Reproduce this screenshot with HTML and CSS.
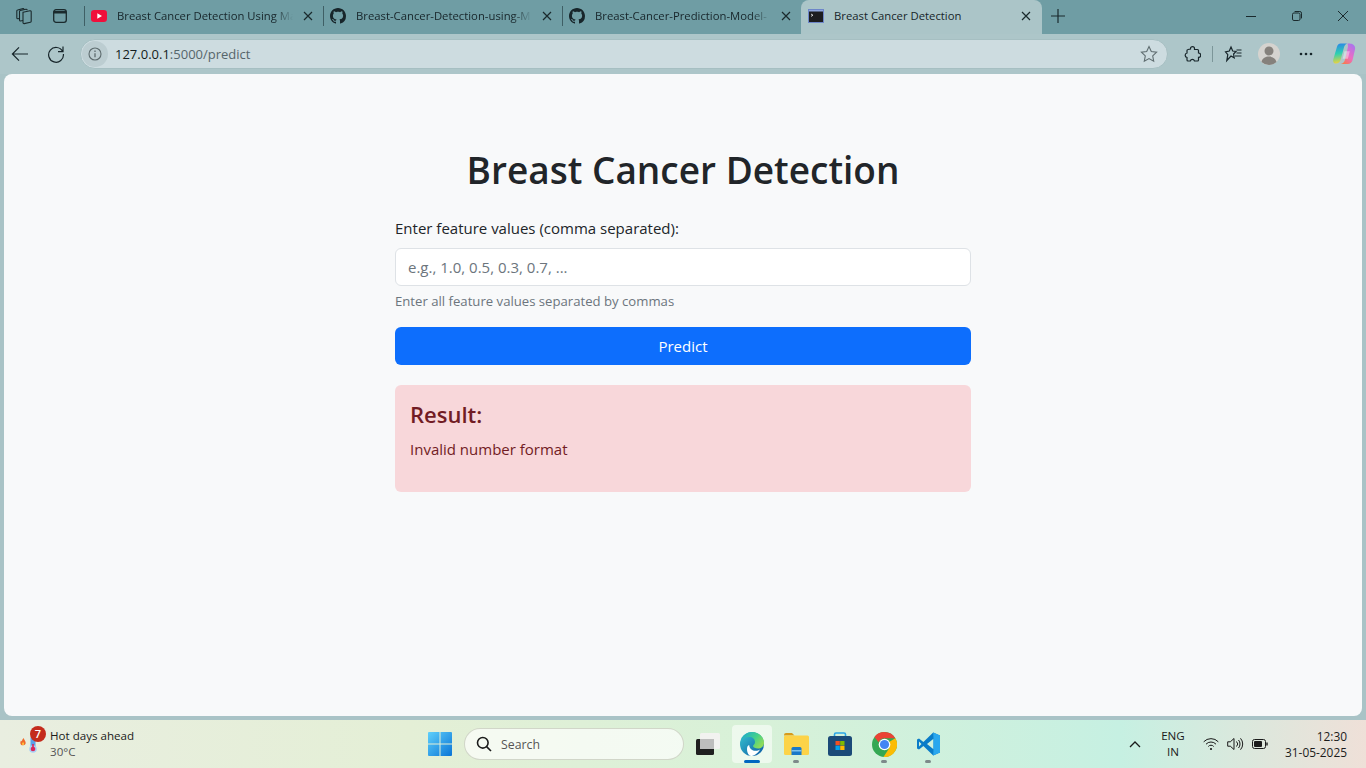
FILE: index.html

```html
<!DOCTYPE html>
<html lang="en">
<head>
    <meta charset="UTF-8">
    <title>Breast Cancer Detection</title>
    <link rel="stylesheet" href="styles.css">
</head>
<body>

<div class="tabstrip">
    <div class="strip-btn">
        <svg width="18" height="18" viewBox="0 0 18 18" fill="none" stroke="#1a2a2d" stroke-width="1.1"><path d="M8 5.200 15 3.800a1 1 0 0 1 1.200 1v9.400a1 1 0 0 1-.8 1l-6.200 1.400a1 1 0 0 1-1.200-1z"/><path d="M8 13.500 5.500 14a1 1 0 0 1-1-1V4.500a1 1 0 0 1 .8-1L11 2.300a1 1 0 0 1 1.200.9"/><path d="M4.500 11.500 2.800 11.800a1 1 0 0 1-1-1V4a1 1 0 0 1 .8-1L8 1.600a1 1 0 0 1 1 .9"/></svg>
    </div>
    <div class="strip-btn">
        <svg width="16" height="16" viewBox="0 0 16 16" fill="none" stroke="#1a2a2d" stroke-width="1.3"><rect x="1.700" y="1.700" width="12.600" height="12.600" rx="2.400"/><path d="M1.700 4.200h12.600" stroke-width="2.600"/></svg>
    </div>
    <div class="tab tab-first">
        <svg class="favicon" width="16" height="16" viewBox="0 0 16 16"><rect y="2" width="16" height="12" rx="3.200" fill="#f00f3c"/><path d="M6.300 5.200 11 8l-4.700 2.800z" fill="#fff"/></svg>
        <span class="tab-title">Breast Cancer Detection Using Ma</span>
        <svg class="tab-close" width="10" height="10" viewBox="0 0 10 10" stroke="#1a2a2d" stroke-width="1.200"><path d="M1 1l8 8M9 1 1 9"/></svg>
    </div>
    <div class="tab">
        <svg class="favicon" width="16" height="16" viewBox="0 0 16 16" fill="#17252a"><path d="M8 0C3.580 0 0 3.580 0 8c0 3.540 2.290 6.530 5.470 7.590.4.070.55-.17.55-.38 0-.19-.01-.82-.01-1.490-2.010.37-2.530-.49-2.690-.94-.09-.23-.48-.94-.82-1.130-.28-.15-.68-.52-.01-.53.63-.01 1.080.58 1.230.82.72 1.210 1.870.87 2.330.66.07-.52.28-.87.51-1.070-1.780-.2-3.640-.89-3.640-3.950 0-.87.31-1.590.82-2.150-.08-.2-.36-1.020.08-2.120 0 0 .67-.21 2.200.82.64-.18 1.320-.27 2-.27s1.360.09 2 .27c1.530-1.040 2.200-.82 2.200-.82.44 1.100.16 1.920.08 2.120.51.56.82 1.270.82 2.150 0 3.070-1.870 3.750-3.650 3.950.29.25.54.73.54 1.480 0 1.070-.01 1.930-.01 2.200 0 .21.15.46.55.38A8.010 8.010 0 0 0 16 8c0-4.420-3.580-8-8-8z"/></svg>
        <span class="tab-title">Breast-Cancer-Detection-using-M</span>
        <svg class="tab-close" width="10" height="10" viewBox="0 0 10 10" stroke="#1a2a2d" stroke-width="1.200"><path d="M1 1l8 8M9 1 1 9"/></svg>
    </div>
    <div class="tab">
        <svg class="favicon" width="16" height="16" viewBox="0 0 16 16" fill="#17252a"><path d="M8 0C3.580 0 0 3.580 0 8c0 3.540 2.290 6.530 5.470 7.590.4.070.55-.17.55-.38 0-.19-.01-.82-.01-1.490-2.010.37-2.530-.49-2.690-.94-.09-.23-.48-.94-.82-1.130-.28-.15-.68-.52-.01-.53.63-.01 1.080.58 1.230.82.72 1.210 1.870.87 2.330.66.07-.52.28-.87.51-1.070-1.780-.2-3.640-.89-3.640-3.950 0-.87.31-1.590.82-2.150-.08-.2-.36-1.020.08-2.120 0 0 .67-.21 2.200.82.64-.18 1.320-.27 2-.27s1.360.09 2 .27c1.530-1.040 2.200-.82 2.200-.82.44 1.100.16 1.920.08 2.120.51.56.82 1.270.82 2.150 0 3.070-1.870 3.750-3.650 3.950.29.25.54.73.54 1.480 0 1.070-.01 1.930-.01 2.200 0 .21.15.46.55.38A8.010 8.010 0 0 0 16 8c0-4.420-3.580-8-8-8z"/></svg>
        <span class="tab-title">Breast-Cancer-Prediction-Model-</span>
        <svg class="tab-close" width="10" height="10" viewBox="0 0 10 10" stroke="#1a2a2d" stroke-width="1.200"><path d="M1 1l8 8M9 1 1 9"/></svg>
    </div>
    <div class="tab tab-active">
        <svg class="favicon" width="16" height="16" viewBox="0 0 16 16"><rect x=".5" y="1.500" width="15" height="13" fill="#1d1d1f" stroke="#6d86c9"/><path d="M1 2h14v1.500H1z" fill="#8fa6dc"/><path d="M3 6l2 1.200L3 8.400" fill="none" stroke="#ddd" stroke-width=".9"/></svg>
        <span class="tab-title">Breast Cancer Detection</span>
        <svg class="tab-close" width="10" height="10" viewBox="0 0 10 10" stroke="#1a2a2d" stroke-width="1.200"><path d="M1 1l8 8M9 1 1 9"/></svg>
    </div>
    <svg class="new-tab" width="14" height="14" viewBox="0 0 14 14" stroke="#1a2a2d" stroke-width="1.200"><path d="M7 0v14M0 7h14"/></svg>
    <div class="win-controls">
        <svg width="10" height="10" viewBox="0 0 10 10" stroke="#1a2a2d"><path d="M0 5.500h10"/></svg>
        <svg width="10" height="10" viewBox="0 0 10 10" fill="none" stroke="#1a2a2d"><rect x=".5" y="2" width="7.500" height="7.500" rx="1.400"/><path d="M2.600 .5h5.200A1.700 1.700 0 0 1 9.500 2.200v5.200"/></svg>
        <svg width="10" height="10" viewBox="0 0 10 10" stroke="#1a2a2d"><path d="M0 0l10 10M10 0 0 10"/></svg>
    </div>
</div>

<div class="toolbar">
    <svg class="nav-btn" width="18" height="16" viewBox="0 0 18 16" fill="none" stroke="#17252a" stroke-width="1.200"><path d="M17 8H1.500M8 1.400 1.400 8 8 14.600"/></svg>
    <svg class="nav-btn" width="18" height="18" viewBox="0 0 18 18" fill="none" stroke="#17252a" stroke-width="1.200"><path d="M15.600 6.400A7.400 7.400 0 1 0 16.400 9M16 1.600v5h-5"/></svg>
    <div class="address-bar">
        <div class="site-info">
            <svg width="14" height="14" viewBox="0 0 14 14" fill="none" stroke="#5d6b6e" stroke-width="1.100"><circle cx="7" cy="7" r="6"/><path d="M7 6.200v4" stroke-width="1.300"/><path d="M7 3.600v1.300" stroke-width="1.300"/></svg>
        </div>
        <span class="url"><span class="url-host">127.0.0.1</span>:5000/predict</span>
        <svg class="fav-star" width="18" height="18" viewBox="0 0 18 18" fill="none" stroke="#5f6d70" stroke-width="1.100"><path d="M9 1.600l2.300 4.900 5.300.7-3.900 3.700 1 5.300L9 13.600l-4.700 2.600 1-5.300L1.400 7.200l5.300-.7z"/></svg>
    </div>
    <div class="toolbar-icons">
        <svg width="17" height="17" viewBox="0 0 17 17" fill="none" stroke="#17252a" stroke-width="1.200"><path d="M6.500 3V2.600a2 2 0 0 1 4 0V3.500h3a1 1 0 0 1 1 1V7a2.200 2.200 0 0 1 0 4.400V14a1 1 0 0 1-1 1H10.500a2.200 2.200 0 0 0-4.200 0H4a1 1 0 0 1-1-1v-2.500a2.300 2.300 0 0 1 0-4.500V4.500a1 1 0 0 1 1-1z"/></svg>
        <span class="toolbar-sep"></span>
        <svg class="favs-icon" width="18" height="18" viewBox="0 0 18 18" fill="none" stroke="#17252a" stroke-width="1.200"><path d="M7 2 8.700 6 12 6.500 9.600 9l.6 3.800L7 11 2.800 15.500l1-5.800L1.500 6.800l3.800-.8zM12.500 5h5M12.500 8h5M11 11h6.500"/></svg>
        <div class="avatar">
            <svg width="24" height="24" viewBox="0 0 24 24"><circle cx="12" cy="12" r="11" fill="#d5d3cf"/><circle cx="12" cy="9" r="4.500" fill="#85817c"/><path d="M4.500 20c1-4 4-5.400 7.500-5.400s6.500 1.400 7.500 5.400a11 11 0 0 1-15 0z" fill="#85817c"/></svg>
        </div>
        <svg class="more-icon" width="14" height="4" viewBox="0 0 14 4" fill="#17252a"><circle cx="2" cy="2" r="1.300"/><circle cx="7" cy="2" r="1.300"/><circle cx="12" cy="2" r="1.300"/></svg>
        <svg class="copilot" width="23" height="22" viewBox="0 0 24 22">
            <defs>
                <linearGradient id="copA" x1=".3" y1="0" x2=".4" y2="1"><stop offset="0" stop-color="#2a86e8"/><stop offset=".5" stop-color="#2fd0b0"/><stop offset="1" stop-color="#f2d33c"/></linearGradient>
                <linearGradient id="copB" x1=".8" y1="0" x2=".2" y2="1"><stop offset="0" stop-color="#a874ee"/><stop offset=".55" stop-color="#ec6cc4"/><stop offset="1" stop-color="#fa7a48"/></linearGradient>
            </defs>
            <path d="M8 0h7c-2 .5-3 2-3.500 4L8 17c-.6 2.500-2.500 4-5 4-2 0-3.300-1.700-2.800-4L4 4c.5-2.500 2-4 4-4z" fill="url(#copA)"/>
            <path d="M15 0c2-.2 4 0 5 .5C22.500 1.500 23.500 4 23 6l-2.500 11c-.5 2.500-2.500 4.500-5 4.500H8c2.500-.5 4-2.500 4.500-4.500L15.500 4c.3-1.500 0-3-.5-4z" fill="url(#copB)"/>
            <path d="M12 8h5.500l-2 8H10z" fill="#fff" fill-opacity=".4"/>
        </svg>
    </div>
</div>

<div class="window-body">
    <main class="page">
        <div class="form-wrap">
            <h1>Breast Cancer Detection</h1>
            <form>
                <label class="form-label" for="features">Enter feature values (comma separated):</label>
                <input class="form-control" type="text" id="features" placeholder="e.g., 1.0, 0.5, 0.3, 0.7, ...">
                <div class="form-text">Enter all feature values separated by commas</div>
                <button class="btn-predict" type="button">Predict</button>
            </form>
            <div class="result">
                <h4>Result:</h4>
                <p>Invalid number format</p>
            </div>
        </div>
    </main>
</div>

<footer class="taskbar">
    <div class="weather">
        <div class="weather-icon">
            <svg width="24" height="26" viewBox="0 0 24 26">
                <path d="M3.300 11c-1.300-.8-1.200-3-.3-4.400.3.500.7.800 1 .6 0-1.200.7-2.500 1.700-3.200 0 1.500 2 2.700 2 5 0 1-1 2.200-2.200 2.200H4.800c-.6 0-1-.1-1.500-.2z" fill="#ef6a2c"/>
                <path d="M4.500 11c-.8-.8-.4-2 .6-3 .8 1 1.300 2 .6 3z" fill="#ffc83d"/>
                <rect x="12.500" y="2" width="5" height="13" rx="2" fill="#5aa0ea"/>
                <circle cx="15" cy="15" r="3.800" fill="#a9d0f5"/>
                <rect x="14.200" y="10" width="1.600" height="5" fill="#d8265a"/>
                <circle cx="15" cy="15" r="2.300" fill="#d8265a"/>
            </svg>
            <span class="badge">7</span>
        </div>
        <div class="weather-text">
            <div class="weather-title">Hot days ahead</div>
            <div class="weather-temp">30°C</div>
        </div>
    </div>

    <div class="task-icons">
        <div class="task-slot">
            <svg width="24" height="24" viewBox="0 0 24 24">
                <defs><linearGradient id="winG" x1="0" y1="0" x2="1" y2="1"><stop offset="0" stop-color="#5fd0fb"/><stop offset="1" stop-color="#0a74d6"/></linearGradient></defs>
                <path d="M0 1a1 1 0 0 1 1-1h10.500v11.500H0zM12.500 0H23a1 1 0 0 1 1 1v10.500H12.500zM0 12.500h11.500V24H1a1 1 0 0 1-1-1zM12.500 12.500H24V23a1 1 0 0 1-1 1H12.500z" fill="url(#winG)"/>
            </svg>
        </div>
        <div class="search">
            <svg width="16" height="16" viewBox="0 0 16 16" fill="none" stroke="#1b1b1b" stroke-width="1.600"><circle cx="6.800" cy="6.800" r="5.300"/><path d="M10.600 10.600 15 15"/></svg>
            <span>Search</span>
        </div>
        <div class="task-slot">
            <svg width="24" height="22" viewBox="0 0 24 22">
                <rect x="4" y="0" width="20" height="16" rx="1.500" fill="#f2f2f0"/>
                <rect x="0" y="6" width="18" height="16" rx="1.500" fill="#1f1f1f"/>
                <rect x="4" y="6" width="14" height="10" fill="#bdbdbd"/>
            </svg>
        </div>
        <div class="task-slot task-active">
            <svg width="24" height="24" viewBox="0 0 24 24">
                <defs>
                    <linearGradient id="edgeA" x1="0" y1="0" x2="1" y2="1"><stop offset="0" stop-color="#37c6d0"/><stop offset="1" stop-color="#0c59a4"/></linearGradient>
                    <linearGradient id="edgeB" x1="0" y1="0" x2="1" y2=".6"><stop offset="0" stop-color="#1aa5d8"/><stop offset=".6" stop-color="#41d18b"/><stop offset="1" stop-color="#8edb5a"/></linearGradient>
                </defs>
                <circle cx="12" cy="12" r="12" fill="url(#edgeA)"/>
                <path d="M1 8C3 3 7 0 12 0c7 0 12 5 12 11 0 3.500-3 5.500-6 5.500-2.500 0-5-1-5-2.500 0-1 2-1.400 2-4C15 7 12.500 5 9.500 5 6 5 3 6 1 8z" fill="url(#edgeB)"/>
                <path d="M9.200 13c0 3.800 3.700 6.500 7.800 5.700 1.200-.2 2.200-.7 3-1.200-2.200 4-6 6.500-9 6.500C9 24 7 21 7 17c0-2 .9-3.800 2.200-4z" fill="#fff"/>
            </svg>
            <span class="active-bar"></span>
        </div>
        <div class="task-slot">
            <svg width="25" height="22" viewBox="0 0 25 22">
                <path d="M0 2a2 2 0 0 1 2-2h6l2.500 2.500H0z" fill="#d79b1c"/>
                <rect y="2.500" width="25" height="19.500" rx="1.500" fill="#fcd348"/>
                <path d="M7.500 15.500a1.500 1.500 0 0 1 1.500-1.500h7a1.500 1.500 0 0 1 1.500 1.500V22h-10z" fill="#1a78c8"/>
                <rect x="7.500" y="17" width="10" height="1.500" fill="#7cc0ee"/>
            </svg>
            <span class="run-dot"></span>
        </div>
        <div class="task-slot">
            <svg width="24" height="24" viewBox="0 0 24 24" fill="none">
                <path d="M6.500 5V2.500a1.500 1.500 0 0 1 1.500-1.500h8a1.500 1.500 0 0 1 1.500 1.500V5" stroke="#2aa5e6" stroke-width="1.600"/>
                <rect y="4" width="24" height="20" rx="2.500" fill="#1b4a78"/>
                <rect x="7.500" y="9" width="4.300" height="4.300" fill="#f25022"/>
                <rect x="12.200" y="9" width="4.300" height="4.300" fill="#7fba00"/>
                <rect x="7.500" y="13.700" width="4.300" height="4.300" fill="#00a4ef"/>
                <rect x="12.200" y="13.700" width="4.300" height="4.300" fill="#ffb900"/>
            </svg>
        </div>
        <div class="task-slot">
            <svg width="25" height="25" viewBox="0 0 24 24">
                <circle cx="12" cy="12" r="12" fill="#34a853"/>
                <path d="M12 0a12 12 0 0 1 10.400 6H12a6 6 0 0 0-5.600 3.800L2.300 4.700A12 12 0 0 1 12 0z" fill="#ea4335"/>
                <path d="M22.400 6A12 12 0 0 1 11 24l5.200-8a6 6 0 0 0 .2-6.500z" fill="#fbbc05"/>
                <circle cx="12" cy="12" r="5.600" fill="#fff"/>
                <circle cx="12" cy="12" r="4.400" fill="#4285f4"/>
            </svg>
            <span class="run-dot"></span>
        </div>
        <div class="task-slot">
            <svg width="24" height="24" viewBox="0 0 24 24">
                <path fill-rule="evenodd" d="M17.200.4 24 3.600v16.800l-6.800 3.200L7.400 14.100 3 17.500l-2-1v-9l2-1 4.400 3.400zM17.500 6.800 11 12l6.500 5.200zM3 9.500v5L5.500 12z" fill="#0a7cc8"/>
                <path d="M17.200.4 24 3.600v16.800l-6.800 3.200.3-6.400V6.800z" fill="#2aa7ee"/>
            </svg>
            <span class="run-dot"></span>
        </div>
    </div>

    <div class="tray">
        <svg width="12" height="7" viewBox="0 0 12 7" fill="none" stroke="#1b1b1b" stroke-width="1.300"><path d="M1 6l5-5 5 5"/></svg>
        <div class="lang">ENG<br>IN</div>
        <div class="tray-icons">
            <svg width="16" height="14" viewBox="0 0 16 14" fill="none" stroke="#1b1b1b" stroke-width="1"><path d="M.7 4.800a10 10 0 0 1 14.600 0M3 7.200a6.800 6.800 0 0 1 10 0M5.300 9.500a3.500 3.500 0 0 1 5.400 0"/><circle cx="8" cy="12" r="1.100" fill="#1b1b1b" stroke="none"/></svg>
            <svg width="17" height="14" viewBox="0 0 17 14" fill="none" stroke="#1b1b1b" stroke-width="1"><path d="M.7 4.800h2.600L7 1.500v11L3.300 9.200H.7zM9.500 4.500a3.500 3.500 0 0 1 0 5M11.500 3a6 6 0 0 1 0 8M13.500 1.300a8.500 8.500 0 0 1 0 11.400"/></svg>
            <svg width="16" height="10" viewBox="0 0 16 10" fill="none" stroke="#1b1b1b"><rect x=".5" y=".5" width="13" height="9" rx="2"/><rect x="2" y="2" width="8" height="6" rx="1" fill="#1b1b1b" stroke="none"/><path d="M15 3.500v3" stroke-width="1.400"/></svg>
        </div>
        <div class="clock">12:30<br>31-05-2025</div>
    </div>
</footer>

</body>
</html>
```

FILE: styles.css

```css
* { box-sizing: border-box; }
html, body { height: 100%; }
body {
    margin: 0;
    height: 768px;
    overflow: hidden;
    display: flex;
    flex-direction: column;
    background: #a9c3c6;
    font-family: "Open Sans", "Noto Sans", sans-serif;
    color: #212529;
}

/* tab strip */
.tabstrip { height: 34px; flex: none; background: #6f9da4; display: flex; align-items: center; color: #17252a; font-size: 11.3px; }
.strip-btn { width: 36px; display: flex; justify-content: center; flex: none; padding-bottom: 3px; }
.strip-btn:first-child { margin-left: 6px; }
.tab { width: 239px; height: 34px; flex: none; display: flex; align-items: center; padding: 0 10px 3px 7px; position: relative; }
.tab::before { content: ""; position: absolute; left: 0; top: 6px; height: 20px; width: 1px; background: #3f5f65; }
.tab-first { margin-left: 6px; }
.favicon { flex: none; margin-right: 10px; }
.tab-title { flex: 1; min-width: 0; white-space: nowrap; overflow: hidden; -webkit-mask-image: linear-gradient(to right, #000 88%, transparent 99%); mask-image: linear-gradient(to right, #000 88%, transparent 99%); }
.tab-close { flex: none; margin-left: 8px; }
.tab-active { width: 241px; background: #abc5c8; border-radius: 8px 8px 0 0; padding-right: 11px; }
.tab-active::before { display: none; }
.tab-active .tab-title { -webkit-mask-image: none; mask-image: none; }
.new-tab { margin-left: 9px; flex: none; margin-bottom: 3px; }
.win-controls { margin-left: auto; display: flex; gap: 36px; padding: 0 18px 3px 0; align-items: center; }
.win-controls svg { display: block; }

/* toolbar */
.toolbar { height: 40px; flex: none; background: #adc6c9; display: flex; align-items: center; padding: 0 0 0 11px; }
.nav-btn { flex: none; margin-right: 19px; }
.nav-btn + .nav-btn { margin-left: -1px; margin-right: 16px; }
.address-bar { width: 1088px; height: 30px; flex: none; margin-left: -1px; background: #cddce0; border: 1px solid #a6bfc2; border-radius: 15px; display: flex; align-items: center; font-size: 13px; color: #56666b; }
.site-info { width: 26px; height: 26px; border-radius: 13px; flex: none; display: flex; align-items: center; justify-content: center; background: #bccdd1; margin: 0 7px 0 1px; }
.url-host { color: #131d20; }
.fav-star { margin-left: auto; margin-right: 9px; }
.toolbar-icons { display: flex; align-items: center; margin-left: 16px; }
.toolbar-icons svg { display: block; }
.toolbar-sep { width: 1px; height: 16px; background: #7c9699; margin: 0 10px 0 11px; }
.favs-icon { margin-left: 1px; }
.avatar { margin-left: 15px; display: flex; }
.more-icon { margin-left: 18px; }
.copilot { margin-left: 20px; }

/* page card */
.window-body { flex: 1; padding: 0 4px 4px; min-height: 0; display: flex; }
.page { flex: 1; background: #f8f9fa; border-radius: 8px; padding-top: 72px; }
.form-wrap { width: 576px; margin: 0 auto; }
h1 { font-size: 37px; font-weight: 600; line-height: 48px; margin: 0 0 22px; text-align: center; color: #212529; }
.form-label { display: block; font-size: 15px; line-height: 24px; margin-bottom: 8px; }
.form-control { display: block; width: 100%; height: 38px; padding: 6px 12px; background: #fff; border: 1px solid #dee2e6; border-radius: 6px; font-family: inherit; font-size: 15px; }
.form-control::placeholder { color: #6c757d; opacity: 1; }
.form-text { font-size: 13.15px; line-height: 21px; margin-top: 5px; margin-bottom: 15px; color: #6c757d; }
.btn-predict { display: block; width: 100%; height: 38px; background: #0d6efd; color: #fff; border: none; border-radius: 6px; font-family: inherit; font-size: 15px; }
.result { margin-top: 20px; padding: 15px; background: #f8d7da; color: #721c24; border-radius: 6px; height: 107px; }
.result h4 { font-size: 22px; font-weight: 600; line-height: 29px; margin: 0 0 8px; }
.result p { font-size: 15px; line-height: 24px; margin: 0; }

/* taskbar */
.taskbar { height: 48px; flex: none; display: grid; grid-template-columns: 420px auto 1fr; align-items: center; background: linear-gradient(90deg, #e9eee0 0%, #e4efd6 30%, #d8f1d8 55%, #c6f0e2 82%, #efe0d8 100%); font-size: 11.6px; color: #1b1b1b; }
.weather { display: flex; align-items: center; padding-left: 18px; }
.weather-icon { width: 32px; height: 34px; position: relative; flex: none; padding-top: 7px; }
.weather-icon svg { display: block; }
.badge { position: absolute; left: 12px; top: -1px; width: 16px; height: 16px; border-radius: 50%; background: #c42b1c; color: #fff; font-size: 11px; font-weight: 600; line-height: 16px; text-align: center; }
.weather-title { line-height: 16px; }
.weather-temp { line-height: 16px; color: #555; }
.task-icons { display: flex; gap: 4px; height: 48px; align-items: center; }
.task-slot { width: 40px; height: 38px; position: relative; display: flex; align-items: center; justify-content: center; border-radius: 4px; }
.task-active { background: rgba(255, 255, 255, .55); }
.active-bar { position: absolute; left: 12px; bottom: 0; width: 16px; height: 3px; border-radius: 2px; background: #0067c0; }
.run-dot { position: absolute; left: 17px; bottom: 0; width: 6px; height: 3px; border-radius: 2px; background: #7d8a8a; }
.search { width: 220px; height: 32px; border-radius: 16px; background: rgba(255, 255, 255, .68); border: 1px solid rgba(200, 205, 190, .8); display: flex; align-items: center; gap: 9px; padding-left: 11px; font-size: 12.3px; color: #555; }
.tray { display: flex; align-items: center; justify-content: flex-end; padding-right: 19px; }
.lang { text-align: center; line-height: 16px; width: 30px; margin-left: 17px; }
.tray-icons { display: flex; align-items: center; gap: 8px; margin-left: 15px; }
.clock { text-align: right; line-height: 16px; margin-left: 17px; font-size: 11.9px; }
```
